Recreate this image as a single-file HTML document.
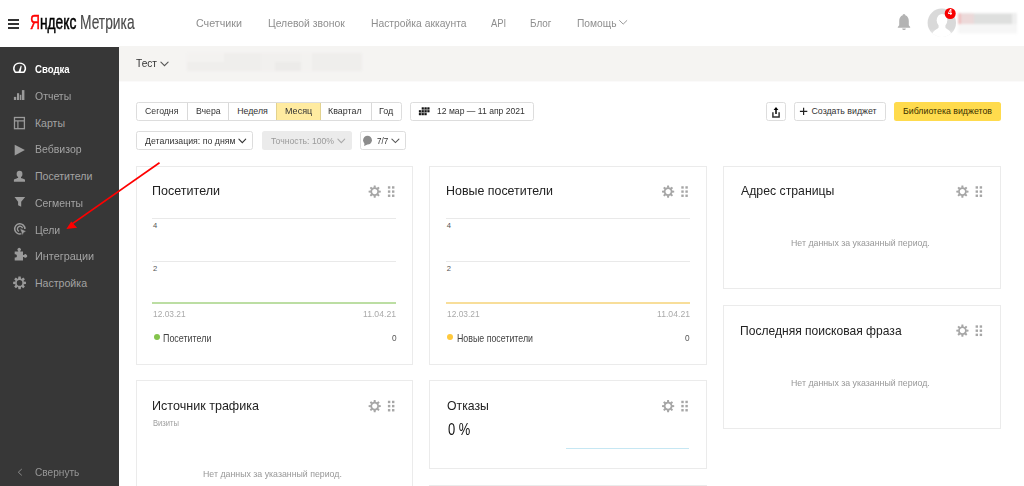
<!DOCTYPE html>
<html lang="ru">
<head>
<meta charset="utf-8">
<title>Яндекс Метрика</title>
<style>
html,body{margin:0;padding:0;}
html{overflow:hidden;width:1024px;height:486px;}
body{width:1024px;height:486px;overflow:hidden;background:#fff;position:relative;font-family:"Liberation Sans",sans-serif;}
.t{position:absolute;white-space:pre;line-height:1;transform-origin:0 0;font-family:"Liberation Sans",sans-serif;}
.abs{position:absolute;}
.box{position:absolute;box-sizing:border-box;}
.sidebar{left:0;top:47px;width:119px;height:440px;background:#373737;}
.subbar{left:119px;top:46px;width:905px;height:35px;background:#f5f4f2;border-bottom:1px solid #fbfafa;box-sizing:content-box;}
.btn{position:absolute;box-sizing:border-box;border:1px solid #dddddd;border-radius:2.5px;background:#fff;}
.w{position:absolute;box-sizing:border-box;border:1px solid #ebebeb;background:#fff;}
.logo{position:absolute;white-space:pre;line-height:1;transform-origin:0 0;font-size:21px;}
svg{position:absolute;overflow:visible;}
</style>
</head>
<body>
<div id="root" style="position:absolute;left:0;top:0;width:1024px;height:486px;overflow:hidden">
<!-- header -->
<div class="abs" style="left:8.1px;top:19px;width:11px;height:2px;background:#333"></div>
<div class="abs" style="left:8.1px;top:23px;width:11px;height:2px;background:#333"></div>
<div class="abs" style="left:8.1px;top:27px;width:11px;height:2px;background:#333"></div>
<span class="logo" style="left:30px;top:10.9px;font-weight:400;color:#000;-webkit-text-stroke:0.55px #000;transform:scaleX(0.656)"><span style="color:#f00;-webkit-text-stroke:0.55px #f00">Я</span>ндекс</span>
<span class="logo" style="left:80px;top:10.9px;color:#4a4a4a;-webkit-text-stroke:0.15px #4a4a4a;transform:scaleX(0.657)">Метрика</span>

<!-- sidebar + subbar -->
<div class="box sidebar"></div>
<div class="box subbar"></div>
<div class="abs" style="left:0;top:0;width:1024px;height:100px;filter:blur(0.9px)">
<div class="abs" style="left:187px;top:62.3px;width:37.5px;height:8.7px;background:#efeeec"></div>
<div class="abs" style="left:187px;top:53.2px;width:37.5px;height:9.1px;background:#f3f2f0"></div>
<div class="abs" style="left:224.4px;top:53.2px;width:37px;height:17.8px;background:#efeeec"></div>
<div class="abs" style="left:261.2px;top:53.2px;width:14px;height:17.8px;background:#f1f0ee"></div>
<div class="abs" style="left:275px;top:53.2px;width:25.5px;height:8.4px;background:#f1f0ee"></div>
<div class="abs" style="left:275px;top:61.6px;width:25.5px;height:9.4px;background:#ecebe9"></div>
<div class="abs" style="left:300.5px;top:53.2px;width:11.5px;height:17.8px;background:#f3f2f0"></div>
<div class="abs" style="left:312px;top:53.2px;width:50.3px;height:17.8px;background:#efeeec"></div>
</div>

<!-- period segmented -->
<div class="btn" style="left:135.5px;top:102px;width:266.7px;height:19px;"></div>
<div class="abs" style="left:276.5px;top:103px;width:43.9px;height:17px;background:#ffeba0"></div>
<div class="abs" style="left:187.4px;top:103px;width:1px;height:17px;background:#d9d9d9"></div>
<div class="abs" style="left:228px;top:103px;width:1px;height:17px;background:#d9d9d9"></div>
<div class="abs" style="left:276px;top:103px;width:1px;height:17px;background:#e2d28f"></div>
<div class="abs" style="left:320.4px;top:103px;width:1px;height:17px;background:#e2d28f"></div>
<div class="abs" style="left:370.5px;top:103px;width:1px;height:17px;background:#d9d9d9"></div>
<!-- calendar button -->
<div class="btn" style="left:410px;top:102px;width:124px;height:19px;"></div>
<!-- second row -->
<div class="btn" style="left:135.5px;top:131px;width:117.2px;height:19px;"></div>
<div class="abs" style="left:262.4px;top:131px;width:89.4px;height:19px;background:#ebebeb;border-radius:2.5px"></div>
<div class="btn" style="left:360px;top:131px;width:46px;height:19px;"></div>
<!-- right buttons -->
<div class="btn" style="left:766px;top:102px;width:20px;height:19px;"></div>
<div class="btn" style="left:794.4px;top:102px;width:91.2px;height:19px;"></div>
<div class="abs" style="left:894px;top:102px;width:107px;height:19px;background:#ffdb4d;border-radius:2.5px"></div>

<!-- widgets -->
<div class="w" style="left:136px;top:166px;width:277px;height:199px"></div>
<div class="w" style="left:429px;top:166px;width:278px;height:199px"></div>
<div class="w" style="left:723px;top:166px;width:278px;height:123px"></div>
<div class="w" style="left:723px;top:305px;width:278px;height:124px"></div>
<div class="w" style="left:136px;top:380px;width:277px;height:120px"></div>
<div class="w" style="left:429px;top:380px;width:278px;height:89px"></div>
<div class="w" style="left:429px;top:485px;width:278px;height:20px"></div>

<!-- chart lines -->
<div class="abs" style="left:152px;top:217.6px;width:244px;height:1px;background:#e9e9e9"></div>
<div class="abs" style="left:152px;top:260.7px;width:244px;height:1px;background:#e9e9e9"></div>
<div class="abs" style="left:152px;top:302px;width:244px;height:2px;background:#bcdea3"></div>
<div class="abs" style="left:446px;top:217.6px;width:244px;height:1px;background:#e9e9e9"></div>
<div class="abs" style="left:446px;top:260.7px;width:244px;height:1px;background:#e9e9e9"></div>
<div class="abs" style="left:446px;top:302px;width:244px;height:2px;background:#f8de9a"></div>
<div class="abs" style="left:153.6px;top:333.8px;width:6px;height:6px;border-radius:50%;background:#84c44c"></div>
<div class="abs" style="left:447.4px;top:333.8px;width:6px;height:6px;border-radius:50%;background:#ffc93c"></div>
<div class="abs" style="left:565.6px;top:447.8px;width:123.1px;height:1px;background:#c6e7f3"></div>

<svg width="1024" height="486" viewBox="0 0 1024 486" style="left:0;top:0">
<path d="M15.3,72.2 C12.2,68.6 14.2,63.1 19.6,63.1 C25,63.1 27,68.6 23.9,72.2 Z" fill="none" stroke="#fff" stroke-width="1.45" stroke-linejoin="round"/>
<path d="M18.3,72.2 L20.8,65.6 L21.7,65.9 L20.6,72.2Z" fill="#fff"/>
<rect x="13.9" y="96.9" width="2.30" height="3.10" fill="#9b9b9b"/>
<rect x="17" y="93.2" width="2.10" height="6.80" fill="#9b9b9b"/>
<rect x="19.8" y="94.8" width="1.50" height="5.20" fill="#9b9b9b"/>
<rect x="21.9" y="90.1" width="2.50" height="9.90" fill="#9b9b9b"/>
<rect x="14.5" y="117.5" width="9.9" height="11.2" fill="none" stroke="#9b9b9b" stroke-width="1.3"/>
<path d="M14.5,120.9 H24.4 M17.9,120.9 V128.7" fill="none" stroke="#9b9b9b" stroke-width="1.2"/>
<path d="M14.7,144.7 L24.9,150.1 L14.7,155.6Z" fill="#9b9b9b"/>
<ellipse cx="19.55" cy="174" rx="2.9" ry="3.3" fill="#9b9b9b"/>
<path d="M18.1,176 H21 V178 C21.6,178.6 25,178.6 25,180 V181.8 H13.9 V180 C13.9,178.6 17.5,178.6 18.1,178Z" fill="#9b9b9b"/>
<path d="M14.5,196.9 H25.2 L21.2,201.8 V206.8 L18.1,205.2 V201.8Z" fill="#9b9b9b"/>
<path d="M 21.6,233.6 A 5.1,5.1 0 1 1 24.9,229.0" fill="none" stroke="#9b9b9b" stroke-width="1.5"/>
<path d="M 19.0,231.3 A 2.6,2.6 0 1 1 22.5,228.2" fill="none" stroke="#9b9b9b" stroke-width="1.4"/>
<path d="M19.8,228.3 L26.3,231.2 L23.7,232.7 L22.7,235.5Z" fill="#9b9b9b" stroke="#373737" stroke-width="0.5"/>
<path d="M14.7,251.6 H18.2 V250.9 A1.7,1.7 0 1 1 20.2,250.9 V251.6 H23 V255 H24 A1.7,1.7 0 1 1 24,256.9 H23 V260.4 H14.7 V257.6 H15.3 A1.6,1.6 0 1 0 15.3,254.3 H14.7Z" fill="#9b9b9b"/>
<g transform="translate(19.55,282.9)"><circle r="3.65" fill="none" stroke="#9b9b9b" stroke-width="1.70"/><path transform="rotate(0.0)" d="M-1.45,-4.00 L-1.16,-6.40 L1.16,-6.40 L1.45,-4.00Z" fill="#9b9b9b"/><path transform="rotate(45.0)" d="M-1.45,-4.00 L-1.16,-6.40 L1.16,-6.40 L1.45,-4.00Z" fill="#9b9b9b"/><path transform="rotate(90.0)" d="M-1.45,-4.00 L-1.16,-6.40 L1.16,-6.40 L1.45,-4.00Z" fill="#9b9b9b"/><path transform="rotate(135.0)" d="M-1.45,-4.00 L-1.16,-6.40 L1.16,-6.40 L1.45,-4.00Z" fill="#9b9b9b"/><path transform="rotate(180.0)" d="M-1.45,-4.00 L-1.16,-6.40 L1.16,-6.40 L1.45,-4.00Z" fill="#9b9b9b"/><path transform="rotate(225.0)" d="M-1.45,-4.00 L-1.16,-6.40 L1.16,-6.40 L1.45,-4.00Z" fill="#9b9b9b"/><path transform="rotate(270.0)" d="M-1.45,-4.00 L-1.16,-6.40 L1.16,-6.40 L1.45,-4.00Z" fill="#9b9b9b"/><path transform="rotate(315.0)" d="M-1.45,-4.00 L-1.16,-6.40 L1.16,-6.40 L1.45,-4.00Z" fill="#9b9b9b"/></g>
<path d="M21.8,469 L18.3,472.2 L21.8,475.4" fill="none" stroke="#8a8a8a" stroke-width="1.0"/>
<path d="M160.90,62.20 L164.50,65.70 L168.10,62.20" fill="none" stroke="#555" stroke-width="1.1" stroke-linecap="round" stroke-linejoin="miter"/>
<path d="M619.60,20.60 L623.20,24.10 L626.80,20.60" fill="none" stroke="#999" stroke-width="1.0" stroke-linecap="round" stroke-linejoin="miter"/>
<path d="M238.90,139.20 L242.30,142.60 L245.70,139.20" fill="none" stroke="#333" stroke-width="1.1" stroke-linecap="round" stroke-linejoin="miter"/>
<path d="M337.90,139.20 L341.30,142.60 L344.70,139.20" fill="none" stroke="#aaa" stroke-width="1.1" stroke-linecap="round" stroke-linejoin="miter"/>
<path d="M391.90,139.20 L395.40,142.60 L398.90,139.20" fill="none" stroke="#555" stroke-width="1.1" stroke-linecap="round" stroke-linejoin="miter"/>
<path d="M421.8,107.4 H429.5 V112.3 H426.7 V115.2 H418.9 V110.3 H421.8Z" fill="#a8a8a8"/>
<rect x="421.75" y="107.35" width="2.0" height="2.0" fill="#111"/>
<rect x="424.60" y="107.35" width="2.0" height="2.0" fill="#111"/>
<rect x="427.45" y="107.35" width="2.0" height="2.0" fill="#111"/>
<rect x="418.90" y="110.25" width="2.0" height="2.0" fill="#111"/>
<rect x="421.75" y="110.25" width="2.0" height="2.0" fill="#111"/>
<rect x="424.60" y="110.25" width="2.0" height="2.0" fill="#111"/>
<rect x="427.45" y="110.25" width="2.0" height="2.0" fill="#111"/>
<rect x="418.90" y="113.15" width="2.0" height="2.0" fill="#111"/>
<rect x="421.75" y="113.15" width="2.0" height="2.0" fill="#111"/>
<rect x="424.60" y="113.15" width="2.0" height="2.0" fill="#111"/>
<circle cx="367.5" cy="140.2" r="4.4" fill="#8c8c8c"/><path d="M364.6,143 L364.1,145.9 L367.5,144.4Z" fill="#8c8c8c"/>
<path d="M772.9,112.2 V117 H779.1 V112.2" fill="none" stroke="#333" stroke-width="1.5"/>
<path d="M776,107 L778.4,110 H776.75 V114 H775.25 V110 H773.6Z" fill="#000"/>
<path d="M799.9,111.4 H807.3 M803.6,107.7 V115.1" fill="none" stroke="#222" stroke-width="1.2"/>
<g transform="translate(374.7,191.6)"><circle r="3.45" fill="none" stroke="#a6a6a6" stroke-width="1.70"/><path transform="rotate(0.0)" d="M-1.15,-3.80 L-0.92,-6.10 L0.92,-6.10 L1.15,-3.80Z" fill="#a6a6a6"/><path transform="rotate(45.0)" d="M-1.15,-3.80 L-0.92,-6.10 L0.92,-6.10 L1.15,-3.80Z" fill="#a6a6a6"/><path transform="rotate(90.0)" d="M-1.15,-3.80 L-0.92,-6.10 L0.92,-6.10 L1.15,-3.80Z" fill="#a6a6a6"/><path transform="rotate(135.0)" d="M-1.15,-3.80 L-0.92,-6.10 L0.92,-6.10 L1.15,-3.80Z" fill="#a6a6a6"/><path transform="rotate(180.0)" d="M-1.15,-3.80 L-0.92,-6.10 L0.92,-6.10 L1.15,-3.80Z" fill="#a6a6a6"/><path transform="rotate(225.0)" d="M-1.15,-3.80 L-0.92,-6.10 L0.92,-6.10 L1.15,-3.80Z" fill="#a6a6a6"/><path transform="rotate(270.0)" d="M-1.15,-3.80 L-0.92,-6.10 L0.92,-6.10 L1.15,-3.80Z" fill="#a6a6a6"/><path transform="rotate(315.0)" d="M-1.15,-3.80 L-0.92,-6.10 L0.92,-6.10 L1.15,-3.80Z" fill="#a6a6a6"/></g>
<rect x="387.90" y="186.25" width="2.4" height="2.4" fill="#a6a6a6"/><rect x="387.90" y="190.40" width="2.4" height="2.4" fill="#a6a6a6"/><rect x="387.90" y="194.55" width="2.4" height="2.4" fill="#a6a6a6"/><rect x="392.00" y="186.25" width="2.4" height="2.4" fill="#a6a6a6"/><rect x="392.00" y="190.40" width="2.4" height="2.4" fill="#a6a6a6"/><rect x="392.00" y="194.55" width="2.4" height="2.4" fill="#a6a6a6"/>
<g transform="translate(668.1,191.6)"><circle r="3.45" fill="none" stroke="#a6a6a6" stroke-width="1.70"/><path transform="rotate(0.0)" d="M-1.15,-3.80 L-0.92,-6.10 L0.92,-6.10 L1.15,-3.80Z" fill="#a6a6a6"/><path transform="rotate(45.0)" d="M-1.15,-3.80 L-0.92,-6.10 L0.92,-6.10 L1.15,-3.80Z" fill="#a6a6a6"/><path transform="rotate(90.0)" d="M-1.15,-3.80 L-0.92,-6.10 L0.92,-6.10 L1.15,-3.80Z" fill="#a6a6a6"/><path transform="rotate(135.0)" d="M-1.15,-3.80 L-0.92,-6.10 L0.92,-6.10 L1.15,-3.80Z" fill="#a6a6a6"/><path transform="rotate(180.0)" d="M-1.15,-3.80 L-0.92,-6.10 L0.92,-6.10 L1.15,-3.80Z" fill="#a6a6a6"/><path transform="rotate(225.0)" d="M-1.15,-3.80 L-0.92,-6.10 L0.92,-6.10 L1.15,-3.80Z" fill="#a6a6a6"/><path transform="rotate(270.0)" d="M-1.15,-3.80 L-0.92,-6.10 L0.92,-6.10 L1.15,-3.80Z" fill="#a6a6a6"/><path transform="rotate(315.0)" d="M-1.15,-3.80 L-0.92,-6.10 L0.92,-6.10 L1.15,-3.80Z" fill="#a6a6a6"/></g>
<rect x="681.30" y="186.25" width="2.4" height="2.4" fill="#a6a6a6"/><rect x="681.30" y="190.40" width="2.4" height="2.4" fill="#a6a6a6"/><rect x="681.30" y="194.55" width="2.4" height="2.4" fill="#a6a6a6"/><rect x="685.40" y="186.25" width="2.4" height="2.4" fill="#a6a6a6"/><rect x="685.40" y="190.40" width="2.4" height="2.4" fill="#a6a6a6"/><rect x="685.40" y="194.55" width="2.4" height="2.4" fill="#a6a6a6"/>
<g transform="translate(962.4,191.6)"><circle r="3.45" fill="none" stroke="#a6a6a6" stroke-width="1.70"/><path transform="rotate(0.0)" d="M-1.15,-3.80 L-0.92,-6.10 L0.92,-6.10 L1.15,-3.80Z" fill="#a6a6a6"/><path transform="rotate(45.0)" d="M-1.15,-3.80 L-0.92,-6.10 L0.92,-6.10 L1.15,-3.80Z" fill="#a6a6a6"/><path transform="rotate(90.0)" d="M-1.15,-3.80 L-0.92,-6.10 L0.92,-6.10 L1.15,-3.80Z" fill="#a6a6a6"/><path transform="rotate(135.0)" d="M-1.15,-3.80 L-0.92,-6.10 L0.92,-6.10 L1.15,-3.80Z" fill="#a6a6a6"/><path transform="rotate(180.0)" d="M-1.15,-3.80 L-0.92,-6.10 L0.92,-6.10 L1.15,-3.80Z" fill="#a6a6a6"/><path transform="rotate(225.0)" d="M-1.15,-3.80 L-0.92,-6.10 L0.92,-6.10 L1.15,-3.80Z" fill="#a6a6a6"/><path transform="rotate(270.0)" d="M-1.15,-3.80 L-0.92,-6.10 L0.92,-6.10 L1.15,-3.80Z" fill="#a6a6a6"/><path transform="rotate(315.0)" d="M-1.15,-3.80 L-0.92,-6.10 L0.92,-6.10 L1.15,-3.80Z" fill="#a6a6a6"/></g>
<rect x="975.60" y="186.25" width="2.4" height="2.4" fill="#a6a6a6"/><rect x="975.60" y="190.40" width="2.4" height="2.4" fill="#a6a6a6"/><rect x="975.60" y="194.55" width="2.4" height="2.4" fill="#a6a6a6"/><rect x="979.70" y="186.25" width="2.4" height="2.4" fill="#a6a6a6"/><rect x="979.70" y="190.40" width="2.4" height="2.4" fill="#a6a6a6"/><rect x="979.70" y="194.55" width="2.4" height="2.4" fill="#a6a6a6"/>
<g transform="translate(962.4,330.7)"><circle r="3.45" fill="none" stroke="#a6a6a6" stroke-width="1.70"/><path transform="rotate(0.0)" d="M-1.15,-3.80 L-0.92,-6.10 L0.92,-6.10 L1.15,-3.80Z" fill="#a6a6a6"/><path transform="rotate(45.0)" d="M-1.15,-3.80 L-0.92,-6.10 L0.92,-6.10 L1.15,-3.80Z" fill="#a6a6a6"/><path transform="rotate(90.0)" d="M-1.15,-3.80 L-0.92,-6.10 L0.92,-6.10 L1.15,-3.80Z" fill="#a6a6a6"/><path transform="rotate(135.0)" d="M-1.15,-3.80 L-0.92,-6.10 L0.92,-6.10 L1.15,-3.80Z" fill="#a6a6a6"/><path transform="rotate(180.0)" d="M-1.15,-3.80 L-0.92,-6.10 L0.92,-6.10 L1.15,-3.80Z" fill="#a6a6a6"/><path transform="rotate(225.0)" d="M-1.15,-3.80 L-0.92,-6.10 L0.92,-6.10 L1.15,-3.80Z" fill="#a6a6a6"/><path transform="rotate(270.0)" d="M-1.15,-3.80 L-0.92,-6.10 L0.92,-6.10 L1.15,-3.80Z" fill="#a6a6a6"/><path transform="rotate(315.0)" d="M-1.15,-3.80 L-0.92,-6.10 L0.92,-6.10 L1.15,-3.80Z" fill="#a6a6a6"/></g>
<rect x="975.60" y="325.35" width="2.4" height="2.4" fill="#a6a6a6"/><rect x="975.60" y="329.50" width="2.4" height="2.4" fill="#a6a6a6"/><rect x="975.60" y="333.65" width="2.4" height="2.4" fill="#a6a6a6"/><rect x="979.70" y="325.35" width="2.4" height="2.4" fill="#a6a6a6"/><rect x="979.70" y="329.50" width="2.4" height="2.4" fill="#a6a6a6"/><rect x="979.70" y="333.65" width="2.4" height="2.4" fill="#a6a6a6"/>
<g transform="translate(374.7,406.1)"><circle r="3.45" fill="none" stroke="#a6a6a6" stroke-width="1.70"/><path transform="rotate(0.0)" d="M-1.15,-3.80 L-0.92,-6.10 L0.92,-6.10 L1.15,-3.80Z" fill="#a6a6a6"/><path transform="rotate(45.0)" d="M-1.15,-3.80 L-0.92,-6.10 L0.92,-6.10 L1.15,-3.80Z" fill="#a6a6a6"/><path transform="rotate(90.0)" d="M-1.15,-3.80 L-0.92,-6.10 L0.92,-6.10 L1.15,-3.80Z" fill="#a6a6a6"/><path transform="rotate(135.0)" d="M-1.15,-3.80 L-0.92,-6.10 L0.92,-6.10 L1.15,-3.80Z" fill="#a6a6a6"/><path transform="rotate(180.0)" d="M-1.15,-3.80 L-0.92,-6.10 L0.92,-6.10 L1.15,-3.80Z" fill="#a6a6a6"/><path transform="rotate(225.0)" d="M-1.15,-3.80 L-0.92,-6.10 L0.92,-6.10 L1.15,-3.80Z" fill="#a6a6a6"/><path transform="rotate(270.0)" d="M-1.15,-3.80 L-0.92,-6.10 L0.92,-6.10 L1.15,-3.80Z" fill="#a6a6a6"/><path transform="rotate(315.0)" d="M-1.15,-3.80 L-0.92,-6.10 L0.92,-6.10 L1.15,-3.80Z" fill="#a6a6a6"/></g>
<rect x="387.90" y="400.75" width="2.4" height="2.4" fill="#a6a6a6"/><rect x="387.90" y="404.90" width="2.4" height="2.4" fill="#a6a6a6"/><rect x="387.90" y="409.05" width="2.4" height="2.4" fill="#a6a6a6"/><rect x="392.00" y="400.75" width="2.4" height="2.4" fill="#a6a6a6"/><rect x="392.00" y="404.90" width="2.4" height="2.4" fill="#a6a6a6"/><rect x="392.00" y="409.05" width="2.4" height="2.4" fill="#a6a6a6"/>
<g transform="translate(668.1,406.1)"><circle r="3.45" fill="none" stroke="#a6a6a6" stroke-width="1.70"/><path transform="rotate(0.0)" d="M-1.15,-3.80 L-0.92,-6.10 L0.92,-6.10 L1.15,-3.80Z" fill="#a6a6a6"/><path transform="rotate(45.0)" d="M-1.15,-3.80 L-0.92,-6.10 L0.92,-6.10 L1.15,-3.80Z" fill="#a6a6a6"/><path transform="rotate(90.0)" d="M-1.15,-3.80 L-0.92,-6.10 L0.92,-6.10 L1.15,-3.80Z" fill="#a6a6a6"/><path transform="rotate(135.0)" d="M-1.15,-3.80 L-0.92,-6.10 L0.92,-6.10 L1.15,-3.80Z" fill="#a6a6a6"/><path transform="rotate(180.0)" d="M-1.15,-3.80 L-0.92,-6.10 L0.92,-6.10 L1.15,-3.80Z" fill="#a6a6a6"/><path transform="rotate(225.0)" d="M-1.15,-3.80 L-0.92,-6.10 L0.92,-6.10 L1.15,-3.80Z" fill="#a6a6a6"/><path transform="rotate(270.0)" d="M-1.15,-3.80 L-0.92,-6.10 L0.92,-6.10 L1.15,-3.80Z" fill="#a6a6a6"/><path transform="rotate(315.0)" d="M-1.15,-3.80 L-0.92,-6.10 L0.92,-6.10 L1.15,-3.80Z" fill="#a6a6a6"/></g>
<rect x="681.30" y="400.75" width="2.4" height="2.4" fill="#a6a6a6"/><rect x="681.30" y="404.90" width="2.4" height="2.4" fill="#a6a6a6"/><rect x="681.30" y="409.05" width="2.4" height="2.4" fill="#a6a6a6"/><rect x="685.40" y="400.75" width="2.4" height="2.4" fill="#a6a6a6"/><rect x="685.40" y="404.90" width="2.4" height="2.4" fill="#a6a6a6"/><rect x="685.40" y="409.05" width="2.4" height="2.4" fill="#a6a6a6"/>
<path d="M904,14 C905,14 905.3,14.8 905.3,15.2 C907.6,16 908.8,18.2 908.8,21 V25.2 L910.2,27 V27.7 H897.8 V27 L899.2,25.2 V21 C899.2,18.2 900.4,16 902.7,15.2 C902.7,14.8 903,14 904,14Z" fill="#b3b3b3"/>
<path d="M902.2,28.6 H905.8 C905.8,30.6 902.2,30.6 902.2,28.6Z" fill="#b3b3b3"/>
<defs><clipPath id="av"><circle cx="941.8" cy="22.8" r="14.2"/></clipPath><linearGradient id="avg" x1="0" y1="0" x2="0" y2="1"><stop offset="0.72" stop-color="#d9d9d9"/><stop offset="1" stop-color="#f1f1f1"/></linearGradient></defs>
<circle cx="941.8" cy="22.8" r="14.2" fill="url(#avg)"/>
<g clip-path="url(#av)"><ellipse cx="942" cy="20.3" rx="5.3" ry="6.4" fill="#fff"/><path d="M938.6,24 H945.4 V27.6 C946.5,29.6 951.5,30 952.5,38 H931 C932,30 937.5,29.6 938.6,27.6Z" fill="#fff"/></g>
<circle cx="950.2" cy="13.5" r="5.5" fill="#f80000"/>
<g style="filter:blur(0.8px)"><rect x="958.4" y="13.4" width="58.6" height="10.6" fill="#dedfde"/><rect x="958.4" y="13.4" width="15.5" height="10.6" fill="#ecd9d9"/><rect x="958.4" y="13.4" width="2.5" height="10.6" fill="#f2bcbc"/><rect x="1012" y="13.4" width="5" height="10.6" fill="#efefef"/><rect x="958.4" y="24" width="58.6" height="9.4" fill="#f6f6f6"/></g>
<path d="M159.5,162.7 L72.5,223.6" stroke="#ff0000" stroke-width="1.7" fill="none"/>
<path d="M66.4,229.1 L71.2,221.4 L77.1,227.7Z" fill="#ff0000"/>
</svg>
<span class="t" style="left:195.5px;top:17.86px;font-size:10.8px;color:#8e8e8e;transform:scaleX(0.9933);">Счетчики</span>
<span class="t" style="left:267.6px;top:17.86px;font-size:10.8px;color:#8e8e8e;transform:scaleX(0.9617);">Целевой звонок</span>
<span class="t" style="left:370.7px;top:17.86px;font-size:10.8px;color:#8e8e8e;transform:scaleX(0.9567);">Настройка аккаунта</span>
<span class="t" style="left:491.1px;top:17.86px;font-size:10.8px;color:#8e8e8e;transform:scaleX(0.8732);">API</span>
<span class="t" style="left:530.1px;top:17.86px;font-size:10.8px;color:#8e8e8e;transform:scaleX(0.9167);">Блог</span>
<span class="t" style="left:576.7px;top:17.86px;font-size:10.8px;color:#8e8e8e;transform:scaleX(0.9472);">Помощь</span>
<span class="t" style="left:135.9px;top:59.10px;font-size:10.4px;color:#333;transform:scaleX(0.9767);">Тест</span>
<span class="t" style="left:34.9px;top:64.13px;font-size:10.6px;color:#fff;font-weight:700;transform:scaleX(0.9064);">Сводка</span>
<span class="t" style="left:34.9px;top:90.89px;font-size:10.6px;color:#a3a3a3;transform:scaleX(0.9884);">Отчеты</span>
<span class="t" style="left:34.9px;top:117.65px;font-size:10.6px;color:#a3a3a3;">Карты</span>
<span class="t" style="left:34.9px;top:144.41px;font-size:10.6px;color:#a3a3a3;transform:scaleX(0.9918);">Вебвизор</span>
<span class="t" style="left:34.9px;top:171.17px;font-size:10.6px;color:#a3a3a3;">Посетители</span>
<span class="t" style="left:34.9px;top:197.93px;font-size:10.6px;color:#a3a3a3;transform:scaleX(0.9835);">Сегменты</span>
<span class="t" style="left:34.9px;top:224.69px;font-size:10.6px;color:#a3a3a3;transform:scaleX(0.9849);">Цели</span>
<span class="t" style="left:34.9px;top:251.45px;font-size:10.6px;color:#a3a3a3;transform:scaleX(1.0253);">Интеграции</span>
<span class="t" style="left:34.9px;top:278.21px;font-size:10.6px;color:#a3a3a3;">Настройка</span>
<span class="t" style="left:34.9px;top:467.13px;font-size:10.6px;color:#969696;transform:scaleX(0.9555);">Свернуть</span>
<span class="t" style="left:144.6px;top:106.85px;font-size:8.8px;color:#333;transform:scaleX(0.9905);">Сегодня</span>
<span class="t" style="left:195.6px;top:106.85px;font-size:8.8px;color:#333;transform:scaleX(0.9902);">Вчера</span>
<span class="t" style="left:237.2px;top:106.85px;font-size:8.8px;color:#333;">Неделя</span>
<span class="t" style="left:284.7px;top:106.85px;font-size:8.8px;color:#333;transform:scaleX(1.0252);">Месяц</span>
<span class="t" style="left:328.3px;top:106.85px;font-size:8.8px;color:#333;transform:scaleX(1.0135);">Квартал</span>
<span class="t" style="left:378.7px;top:106.85px;font-size:8.8px;color:#333;transform:scaleX(1.0203);">Год</span>
<span class="t" style="left:436.9px;top:106.85px;font-size:8.8px;color:#333;transform:scaleX(0.9779);">12 мар — 11 апр 2021</span>
<span class="t" style="left:144.6px;top:137.05px;font-size:8.8px;color:#333;transform:scaleX(0.9959);">Детализация: по дням</span>
<span class="t" style="left:271.2px;top:137.05px;font-size:8.8px;color:#9a9a9a;transform:scaleX(0.9825);">Точность: 100%</span>
<span class="t" style="left:377.2px;top:137.05px;font-size:8.8px;color:#333;transform:scaleX(0.9155);">7/7</span>
<span class="t" style="left:811.5px;top:106.85px;font-size:8.8px;color:#333;">Создать виджет</span>
<span class="t" style="left:903.0px;top:106.85px;font-size:8.8px;color:#3a3000;">Библиотека виджетов</span>
<span class="t" style="left:152.4px;top:185.08px;font-size:12.9px;color:#222;transform:scaleX(0.9721);">Посетители</span>
<span class="t" style="left:445.7px;top:185.08px;font-size:12.9px;color:#222;transform:scaleX(0.9638);">Новые посетители</span>
<span class="t" style="left:741.0px;top:185.08px;font-size:12.9px;color:#222;transform:scaleX(0.9517);">Адрес страницы</span>
<span class="t" style="left:740.1px;top:324.88px;font-size:12.9px;color:#222;transform:scaleX(0.9366);">Последняя поисковая фраза</span>
<span class="t" style="left:151.9px;top:399.98px;font-size:12.9px;color:#222;transform:scaleX(0.9748);">Источник трафика</span>
<span class="t" style="left:447.0px;top:399.98px;font-size:12.9px;color:#222;transform:scaleX(0.9509);">Отказы</span>
<span class="t" style="left:447.8px;top:421.86px;font-size:16px;color:#111;transform:scaleX(0.8086);">0 %</span>
<span class="t" style="left:153.0px;top:221.87px;font-size:7.6px;color:#555;">4</span>
<span class="t" style="left:153.0px;top:265.07px;font-size:7.6px;color:#555;">2</span>
<span class="t" style="left:446.8px;top:221.87px;font-size:7.6px;color:#555;">4</span>
<span class="t" style="left:446.8px;top:265.07px;font-size:7.6px;color:#555;">2</span>
<span class="t" style="left:153.4px;top:310.66px;font-size:8.2px;color:#aaa;transform:scaleX(1.0227);">12.03.21</span>
<span class="t" style="left:363.0px;top:310.66px;font-size:8.2px;color:#aaa;transform:scaleX(1.0555);">11.04.21</span>
<span class="t" style="left:447.2px;top:310.66px;font-size:8.2px;color:#aaa;transform:scaleX(1.0227);">12.03.21</span>
<span class="t" style="left:657.0px;top:310.66px;font-size:8.2px;color:#aaa;transform:scaleX(1.0555);">11.04.21</span>
<span class="t" style="left:162.8px;top:334.30px;font-size:10.4px;color:#444;transform:scaleX(0.8583);">Посетители</span>
<span class="t" style="left:391.6px;top:333.44px;font-size:9.4px;color:#555;transform:scaleX(0.8814);">0</span>
<span class="t" style="left:456.6px;top:334.30px;font-size:10.4px;color:#444;transform:scaleX(0.8493);">Новые посетители</span>
<span class="t" style="left:685.4px;top:333.44px;font-size:9.4px;color:#555;transform:scaleX(0.8814);">0</span>
<span class="t" style="left:948.2px;top:9.46px;font-size:8.2px;color:#fff;font-weight:700;transform:scaleX(0.8767);">4</span>
<span class="t" style="left:791.1px;top:238.40px;font-size:9.8px;color:#979797;transform:scaleX(0.8966);">Нет данных за указанный период.</span>
<span class="t" style="left:791.1px;top:377.90px;font-size:9.8px;color:#979797;transform:scaleX(0.8966);">Нет данных за указанный период.</span>
<span class="t" style="left:203.2px;top:469.40px;font-size:9.8px;color:#979797;transform:scaleX(0.8972);">Нет данных за указанный период.</span>
<span class="t" style="left:152.9px;top:420.26px;font-size:8.2px;color:#a0a0a0;transform:scaleX(0.9286);">Визиты</span>
</div>
</body>
</html>
